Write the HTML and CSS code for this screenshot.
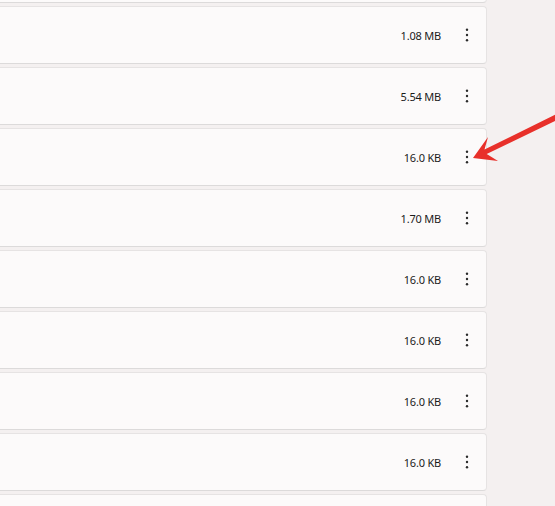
FILE: index.html
```html
<!DOCTYPE html>
<html lang="en">
<head>
    <meta charset="UTF-8">
    <meta name="viewport" content="width=device-width, initial-scale=1.0">
    <title>Files</title>
    <link rel="stylesheet" href="styles.css">
</head>
<body>
    <div class="file-list">
        <div class="file-row"></div>
        <div class="file-row"><span class="file-size">1.08 MB</span><button class="more"><svg width="4" height="14" viewBox="0 0 4 14"><circle cx="2" cy="1.7" r="1.2"/><circle cx="2" cy="7" r="1.2"/><circle cx="2" cy="12.3" r="1.2"/></svg></button></div>
        <div class="file-row"><span class="file-size">5.54 MB</span><button class="more"><svg width="4" height="14" viewBox="0 0 4 14"><circle cx="2" cy="1.7" r="1.2"/><circle cx="2" cy="7" r="1.2"/><circle cx="2" cy="12.3" r="1.2"/></svg></button></div>
        <div class="file-row"><span class="file-size">16.0 KB</span><button class="more"><svg width="4" height="14" viewBox="0 0 4 14"><circle cx="2" cy="1.7" r="1.2"/><circle cx="2" cy="7" r="1.2"/><circle cx="2" cy="12.3" r="1.2"/></svg></button></div>
        <div class="file-row"><span class="file-size">1.70 MB</span><button class="more"><svg width="4" height="14" viewBox="0 0 4 14"><circle cx="2" cy="1.7" r="1.2"/><circle cx="2" cy="7" r="1.2"/><circle cx="2" cy="12.3" r="1.2"/></svg></button></div>
        <div class="file-row"><span class="file-size">16.0 KB</span><button class="more"><svg width="4" height="14" viewBox="0 0 4 14"><circle cx="2" cy="1.7" r="1.2"/><circle cx="2" cy="7" r="1.2"/><circle cx="2" cy="12.3" r="1.2"/></svg></button></div>
        <div class="file-row"><span class="file-size">16.0 KB</span><button class="more"><svg width="4" height="14" viewBox="0 0 4 14"><circle cx="2" cy="1.7" r="1.2"/><circle cx="2" cy="7" r="1.2"/><circle cx="2" cy="12.3" r="1.2"/></svg></button></div>
        <div class="file-row"><span class="file-size">16.0 KB</span><button class="more"><svg width="4" height="14" viewBox="0 0 4 14"><circle cx="2" cy="1.7" r="1.2"/><circle cx="2" cy="7" r="1.2"/><circle cx="2" cy="12.3" r="1.2"/></svg></button></div>
        <div class="file-row"><span class="file-size">16.0 KB</span><button class="more"><svg width="4" height="14" viewBox="0 0 4 14"><circle cx="2" cy="1.7" r="1.2"/><circle cx="2" cy="7" r="1.2"/><circle cx="2" cy="12.3" r="1.2"/></svg></button></div>
        <div class="file-row"></div>
    </div>

    <!-- annotation arrow -->
    <svg class="callout" width="555" height="506" viewBox="0 0 555 506">
        <polygon points="555,114.8 484.5,149.5 488,137 473,158 498,161 486.7,154 555,121" fill="#e8302a"/>
    </svg>
</body>
</html>
```

FILE: styles.css
```css
html, body {
    margin: 0;
    height: 100%;
    overflow: hidden;
}
body {
    background-color: #f4f0f0;
    font-family: "Noto Sans", "Open Sans", sans-serif;
    position: relative;
}
.file-list {
    display: flex;
    flex-direction: column;
    gap: 3px;
    width: 507px;
    margin-left: -20px;
    margin-top: -55px;
}
.file-row {
    box-sizing: border-box;
    height: 58px;
    flex-shrink: 0;
    display: flex;
    align-items: center;
    justify-content: flex-end;
    gap: 8px;
    padding-right: 5px;
    background-color: #fcfafa;
    border: 1px solid #e6e3e3;
    border-bottom-color: #dcdada;
    border-radius: 4px;
}
.file-size {
    font-size: 11px;
    color: #1b1b1b;
    letter-spacing: -0.2px;
    padding-top: 1px;
}
.more {
    width: 32px;
    height: 32px;
    border: none;
    background: none;
    padding: 0 0 0 4px;
    display: flex;
    align-items: center;
    justify-content: center;
    cursor: pointer;
}
.more svg {
    fill: #2a2a2a;
}
.callout {
    position: absolute;
    left: 0;
    top: 0;
    pointer-events: none;
}
```
